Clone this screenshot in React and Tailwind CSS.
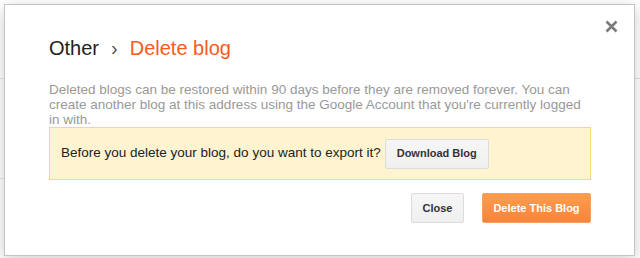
export default function App() {
  return (
    <div
      className="w-[640px] h-[258px] overflow-hidden bg-white pl-[4px] pt-[4px] relative"
      style={{ fontFamily: '"Liberation Sans", Arial, sans-serif' }}
    >
      <div className="absolute left-0 top-[78px] w-[4px] h-px bg-[#e5e5e5]" />
      <div className="absolute left-0 top-[178px] w-[4px] h-px bg-[#e5e5e5]" />
      <div className="absolute right-0 top-[78px] w-[6px] h-px bg-[#e0e0e0]" />
      <div className="relative w-[631px] h-[252px] bg-white border border-[#c4c4c4] shadow-[0_4px_16px_rgba(0,0,0,0.2)] pl-[44px] pr-[43px] pt-[31px]">
        <button className="absolute right-[16px] top-[15px] w-[13px] h-[13px] flex items-center justify-center">
          <svg width="13" height="13" viewBox="0 0 13 13">
            <path d="M1.5 1.5 L11.5 11.5 M11.5 1.5 L1.5 11.5" stroke="#7a7a7a" strokeWidth="2.6" strokeLinecap="butt" />
          </svg>
        </button>
        <div className="flex items-baseline text-[20px] leading-[24px] h-[24px]">
          <span className="text-[#222]">Other</span>
          <span className="text-[#555] mx-[12px]">›</span>
          <span className="text-[#f85a1e]">Delete blog</span>
        </div>
        <p className="mt-[22px] text-[13.5px] leading-[15px] text-[#999]">
          Deleted blogs can be restored within 90 days before they are removed forever. You can create another blog at this address using the Google Account that you're currently logged in with.
        </p>
        <div className="flex items-center bg-[#fff4cf] border border-[#fbd77d] pl-[11px] py-[10.5px]">
          <span className="text-[13.5px] text-[#222]">Before you delete your blog, do you want to export it?</span>
          <button className="ml-[4px] h-[30px] px-[11px] border border-[#dcdcdc] rounded-[2px] bg-gradient-to-b from-[#f6f6f6] to-[#f0f0f0] text-[11px] font-bold text-[#333]">
            Download Blog
          </button>
        </div>
        <div className="flex justify-end gap-[18px] mt-[13px]">
          <button className="h-[30px] w-[53px] border border-[#dcdcdc] rounded-[2px] bg-gradient-to-b from-[#f6f6f6] to-[#f0f0f0] text-[11px] font-bold text-[#333]">
            Close
          </button>
          <button className="h-[30px] w-[109px] border border-[#f5a060] rounded-[2px] bg-gradient-to-b from-[#fd9e4e] to-[#f7843a] text-[11px] font-bold text-white">
            Delete This Blog
          </button>
        </div>
      </div>
    </div>
  );
}
